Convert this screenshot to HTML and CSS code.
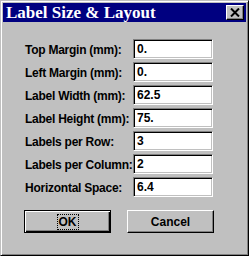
FILE: index.html
```html
<!DOCTYPE html>
<html lang="en">
<head>
    <meta charset="UTF-8">
    <title>Label Size &amp; Layout</title>
    <link rel="stylesheet" href="styles.css">
</head>
<body>

    <!-- Dialog window -->
    <div class="window">
        <div class="titlebar">
            <span class="title">Label Size &amp; Layout</span>
            <button class="close-btn">
                <svg width="10" height="9" viewBox="0 0 10 9">
                    <path d="M1 0.5 L9 8.5 M9 0.5 L1 8.5" stroke="#000" stroke-width="2" fill="none"/>
                </svg>
            </button>
        </div>

        <div class="form">
            <label>Top Margin (mm):</label>
            <input type="text" value="0.">

            <label>Left Margin (mm):</label>
            <input type="text" value="0.">

            <label>Label Width (mm):</label>
            <input type="text" value="62.5">

            <label>Label Height (mm):</label>
            <input type="text" value="75.">

            <label>Labels per Row:</label>
            <input type="text" value="3">

            <label>Labels per Column:</label>
            <input type="text" value="2">

            <label>Horizontal Space:</label>
            <input type="text" value="6.4">
        </div>

        <div class="buttons">
            <button class="btn default"><span class="focus">OK</span></button>
            <button class="btn">Cancel</button>
        </div>
    </div>

</body>
</html>
```

FILE: styles.css
```css
* {
    margin: 0;
    padding: 0;
    box-sizing: border-box;
}
body {
    background: #c0c0c0;
    font-family: "Liberation Sans", Arial, sans-serif;
    font-weight: bold;
    font-size: 12px;
}
.window {
    width: 249px;
    height: 256px;
    background: #c0c0c0;
    border: 1px solid;
    border-color: #c0c0c0 #000 #000 #c0c0c0;
    box-shadow: inset 1px 1px 0 #fff, inset -1px -1px 0 #808080;
    padding: 2px;
}
.titlebar {
    height: 19px;
    background: #000080;
    display: flex;
    align-items: center;
    justify-content: space-between;
    padding: 0 2px 0 3px;
}
.title {
    font-family: "Liberation Serif", "Times New Roman", serif;
    font-size: 17px;
    font-weight: bold;
    color: white;
    line-height: 19px;
}
.close-btn {
    width: 18px;
    height: 15px;
    background: #c0c0c0;
    border: 1px solid;
    border-color: #fff #000 #000 #fff;
    box-shadow: inset -1px -1px 0 #808080;
    display: flex;
    align-items: center;
    justify-content: center;
}
.form {
    display: grid;
    grid-template-columns: 108px 80px;
    grid-auto-rows: 20px;
    row-gap: 3px;
    align-items: center;
    padding: 17px 0 0 22px;
}
.form label {
    white-space: nowrap;
    letter-spacing: -0.25px;
    padding-top: 2px;
    color: #000;
}
.form input {
    height: 20px;
    width: 80px;
    background: white;
    border: 1px solid;
    border-color: #808080 #fff #fff #808080;
    box-shadow: inset 1px 1px 0 #000, inset -1px -1px 0 #c0c0c0;
    padding: 0 0 0 3px;
    font-family: "Liberation Sans", Arial, sans-serif;
    font-weight: bold;
    font-size: 12px;
    color: #000;
    outline: none;
}
.buttons {
    display: flex;
    gap: 16px;
    padding: 13px 0 0 21px;
}
.btn {
    width: 87px;
    height: 23px;
    background: #c0c0c0;
    border: 1px solid;
    border-color: #fff #000 #000 #fff;
    box-shadow: inset -1px -1px 0 #808080;
    font-family: "Liberation Sans", Arial, sans-serif;
    font-weight: bold;
    font-size: 12px;
    color: #000;
}
.btn.default {
    border: 1px solid #000;
    box-shadow: inset 1px 1px 0 #fff, inset -1px -1px 0 #000, inset -2px -2px 0 #808080;
}
.focus {
    border: 1px dotted #000;
    padding: 0 1px;
}
```
